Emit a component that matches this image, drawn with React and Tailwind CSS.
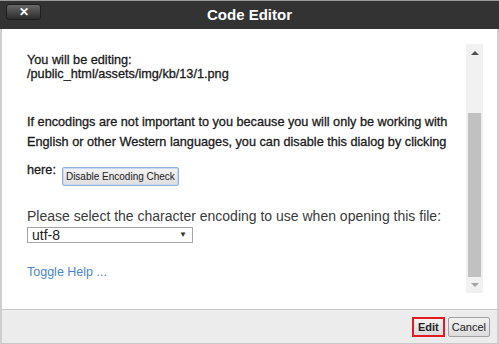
import React from "react";

const font = { fontFamily: '"Liberation Sans", Arial, sans-serif' };

function FakeScrollbar() {
  return (
    <div className="flex w-[17px] shrink-0 flex-col bg-[#f1f1f1]">
      <div className="flex h-[17px] items-center justify-center">
        <svg width="8" height="5" viewBox="0 0 8 5">
          <path d="M0 5 L4 1 L8 5 Z" fill="#505050" />
        </svg>
      </div>
      <div className="mx-[2px] h-[164px] mt-[52px] bg-[#c1c1c1]" />
      <div className="flex-1" />
      <div className="flex h-[16px] items-center justify-center">
        <svg width="8" height="5" viewBox="0 0 8 5">
          <path d="M0 0 L4 4 L8 0 Z" fill="#a3a3a3" />
        </svg>
      </div>
    </div>
  );
}

export default function App() {
  return (
    <div
      className="flex h-[344px] w-[499px] flex-col overflow-hidden bg-white"
      style={font}
    >
      {/* --- Title bar --- */}
      <div className="relative flex h-[29px] shrink-0 items-center justify-center border-t border-[#9a9a9a] bg-[#333333]">
        <button className="absolute left-[6px] top-[3px] flex h-[16px] w-[35px] items-center justify-center rounded-[3px] border border-[#1e1e1e] bg-gradient-to-b from-[#6a6a6a] to-[#2c2c2c] text-[12px] font-bold leading-none text-white">
          ✕
        </button>
        <span className="text-[15px] font-bold text-white">Code Editor</span>
      </div>

      {/* --- Body --- */}
      <div className="flex h-[280px] shrink-0 border-x-2 border-[#cfcfcf] pb-[16px] pl-[10px] pr-[14px] pt-[15px]">
        <div className="flex-1 pl-[15px] pt-[9px] text-[#1a1a1a]">
          <div className="text-[12.7px] [-webkit-text-stroke:0.3px_#1a1a1a]">
            <div className="leading-[14px]">You will be editing:</div>
            <div className="leading-[14px]">/public_html/assets/img/kb/13/1.png</div>

            <div className="mt-[31px] leading-[20px]">
              If encodings are not important to you because you will only be working with
              <br />
              English or other Western languages, you can disable this dialog by clicking
            </div>
            <div className="mt-[8px] flex items-start">
              <span className="leading-[20px]">here:</span>
              <button className="ml-[6px] mt-[7px] h-[19px] rounded-[2px] border border-[#8fb1e0] bg-gradient-to-b from-[#f4f4f4] to-[#dedede] px-[3px] text-[10px] leading-[17px] text-[#222] shadow-[inset_0_0_0_1px_#c7d8f0] [-webkit-text-stroke:0px]">
                Disable Encoding Check
              </button>
            </div>
          </div>

          <div className="mt-[20px] text-[14px] leading-[20px] text-[#3a3a3a]">
            Please select the character encoding to use when opening this file:
          </div>
          <div className="mt-[1px] flex h-[16px] w-[166px] items-center justify-between border border-[#a6a6a6] bg-white pl-[4px] pr-[5px] text-[14px] text-[#222]">
            <span className="leading-none">utf-8</span>
            <span className="text-[8px] leading-none text-[#333]">▼</span>
          </div>

          <div className="mt-[19px] text-[12.5px] leading-[20px] text-[#4a86d4]">Toggle Help ...</div>
        </div>
        <FakeScrollbar />
      </div>

      {/* --- Footer --- */}
      <div className="flex flex-1 items-center justify-end gap-[3px] border-x-2 border-t border-b border-[#c8c8c8] border-x-[#cfcfcf] bg-[#ececec] pr-[7px]">
        <div className="flex h-[20px] items-center border-2 border-[#e31b23]">
          <button className="h-[16px] bg-gradient-to-b from-[#f2f2f2] to-[#dcdcdc] px-[4px] text-[11px] font-bold leading-[16px] text-[#222]">
            Edit
          </button>
        </div>
        <button className="h-[20px] rounded-[2px] border border-[#a0a0a0] bg-gradient-to-b from-[#f2f2f2] to-[#dcdcdc] px-[3px] text-[11px] leading-[18px] text-[#222]">
          Cancel
        </button>
      </div>
    </div>
  );
}
